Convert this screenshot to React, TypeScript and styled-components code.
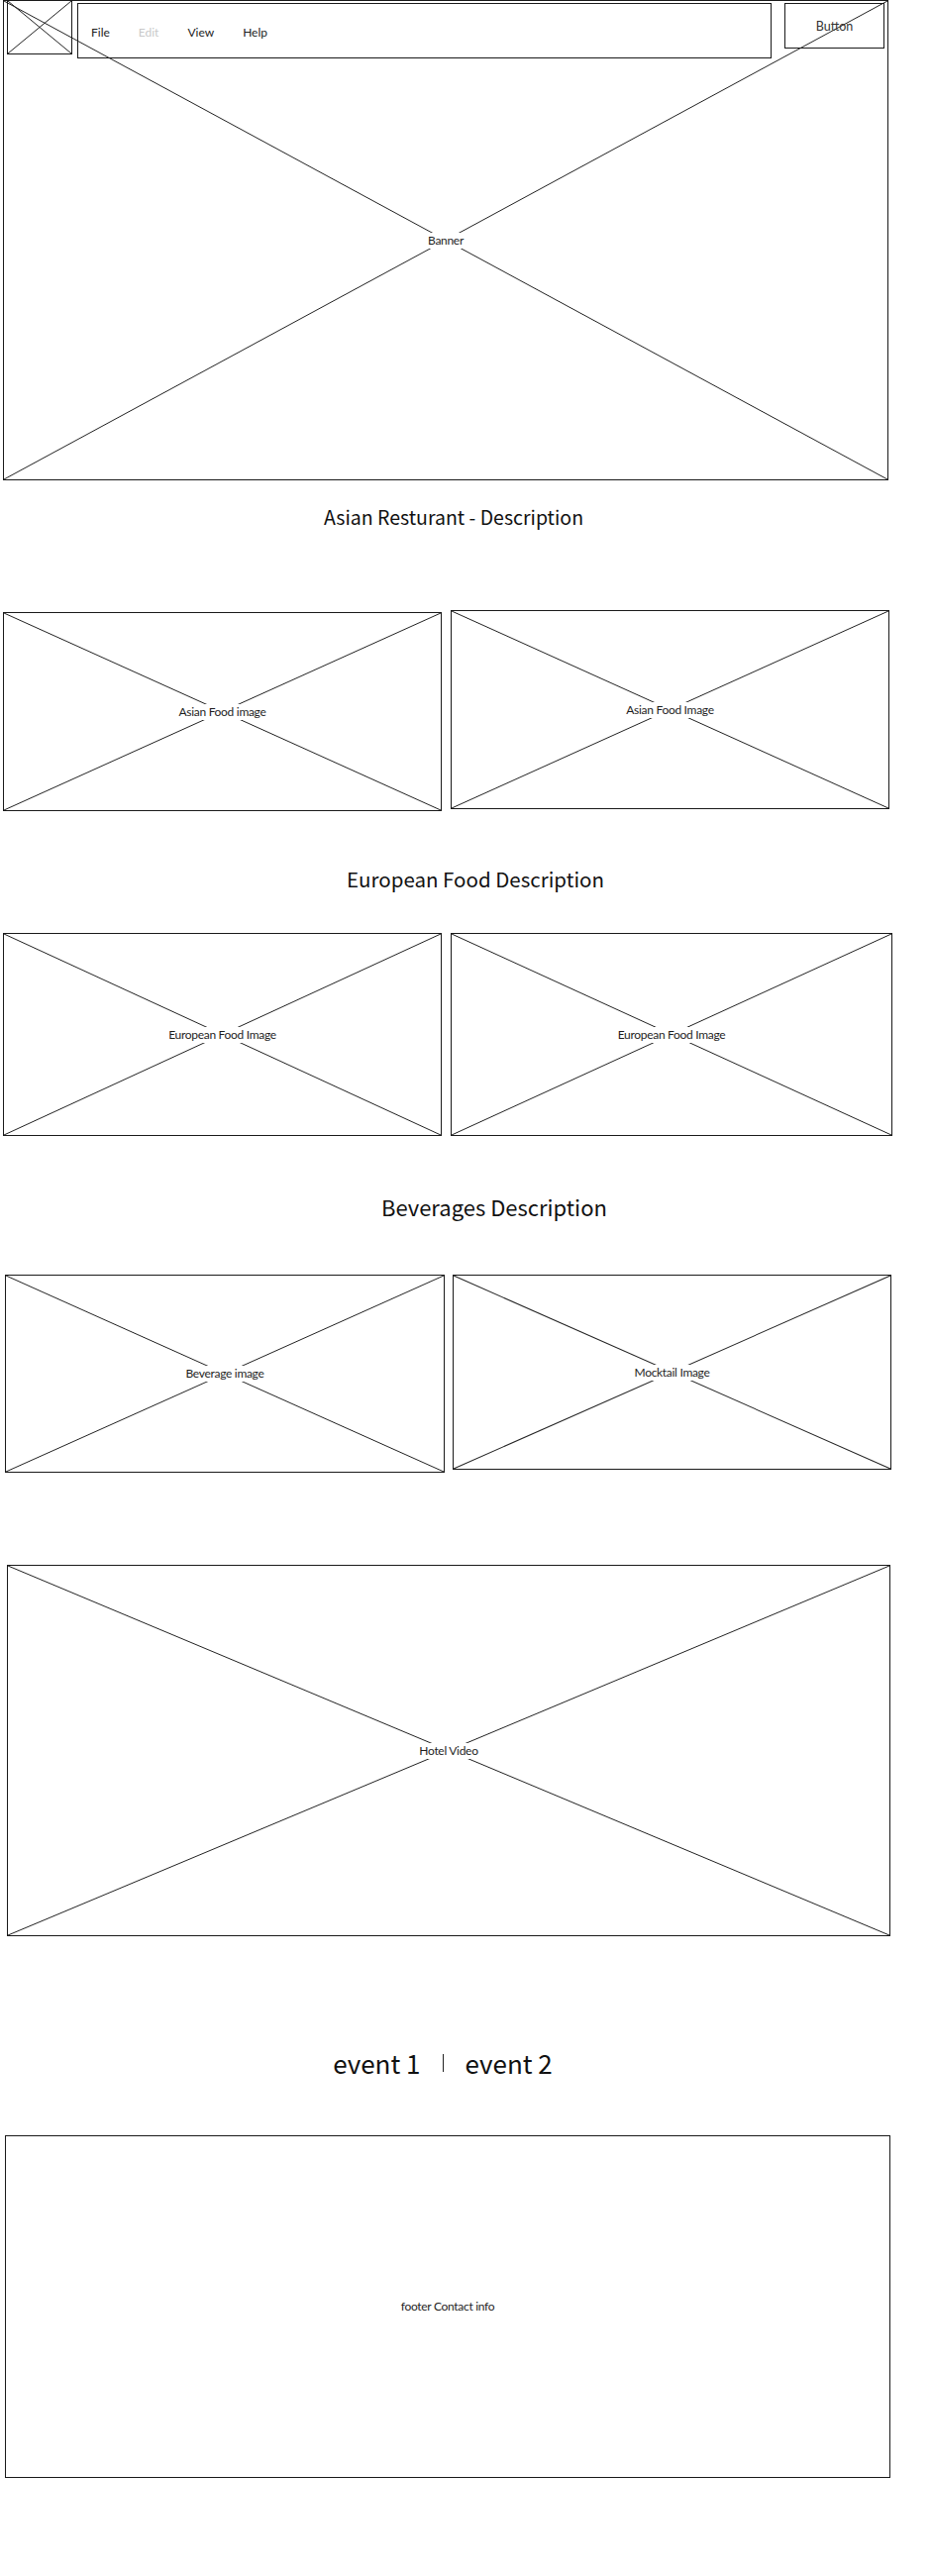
import React from "react";
import styled, { createGlobalStyle } from "styled-components";

const GlobalStyle = createGlobalStyle`
  html, body { margin: 0; padding: 0; background: #fff; }
  body {
    font-family: "Noto Sans CJK SC", "Lato", sans-serif;
    color: #141414;
  }
`;

const Page = styled.div`
  width: 941px;
  min-height: 2601px;
  display: flex;
  flex-direction: column;
  align-items: flex-start;
  overflow: hidden;
  background: #fff;
`;

const Frame = styled.div<{ $w: number; $h: number; $left?: number; $top?: number }>`
  position: relative;
  box-sizing: border-box;
  flex: none;
  width: ${(p) => p.$w}px;
  height: ${(p) => p.$h}px;
  margin-left: ${(p) => p.$left ?? 0}px;
  margin-top: ${(p) => p.$top ?? 0}px;
  border: 1px solid #1a1a1a;
  display: flex;
  align-items: center;
  justify-content: center;
`;

const CrossSvg = styled.svg`
  position: absolute;
  inset: 0;
  width: 100%;
  height: 100%;
  overflow: visible;
`;

const Label = styled.span`
  position: relative;
  z-index: 1;
  background: #fff;
  padding: 0 4px;
  font-family: "Lato", "Noto Sans CJK SC", sans-serif;
  font-size: 12px;
  letter-spacing: -0.3px;
  line-height: 16px;
  white-space: nowrap;
  color: #1e1e1e;
`;

const Header = styled.div`
  position: absolute;
  top: -1px;
  left: 3px;
  z-index: 2;
  display: flex;
  align-items: flex-start;
`;

const MenuBar = styled.nav`
  box-sizing: border-box;
  width: 701px;
  height: 56px;
  margin-top: 3px;
  margin-left: 5px;
  padding: 3px 0 0 13px;
  border: 1px solid #1a1a1a;
  display: flex;
  align-items: center;
  gap: 29px;
`;

const MenuItem = styled.span<{ $disabled?: boolean }>`
  font-family: "Lato", "Noto Sans CJK SC", sans-serif;
  font-size: 12px;
  color: ${(p) => (p.$disabled ? "#c9c9c9" : "#222")};
`;

const Button = styled.div`
  box-sizing: border-box;
  width: 101px;
  height: 46px;
  margin-top: 3px;
  margin-left: 13px;
  border: 1px solid #1a1a1a;
  display: flex;
  align-items: center;
  justify-content: center;
  font-family: "Lato", "Noto Sans CJK SC", sans-serif;
  font-size: 12.5px;
  color: #333;
`;

const Heading = styled.h2<{ $shift: number; $top: number; $size?: number }>`
  margin: ${(p) => p.$top}px 0 0 0;
  box-sizing: border-box;
  width: 941px;
  height: 40px;
  padding-left: ${(p) => Math.max(0, p.$shift * 2)}px;
  padding-right: ${(p) => Math.max(0, -p.$shift * 2)}px;
  display: flex;
  align-items: center;
  justify-content: center;
  gap: 22px;
  font-size: ${(p) => p.$size ?? 22}px;
  font-weight: 400;
  line-height: 40px;
  color: #111;
  white-space: nowrap;
`;

const Divider = styled.span`
  width: 1px;
  height: 18px;
  background: #222;
`;

const Row = styled.div<{ $left: number; $gap: number; $top: number }>`
  display: flex;
  align-items: flex-start;
  margin-top: ${(p) => p.$top}px;
  padding-left: ${(p) => p.$left}px;
  gap: ${(p) => p.$gap}px;
`;

const Cross: React.FC = () => (
  <CrossSvg viewBox="0 0 100 100" preserveAspectRatio="none" aria-hidden="true">
    <line x1="0" y1="0" x2="100" y2="100" stroke="#222" strokeWidth="1" vectorEffect="non-scaling-stroke" />
    <line x1="100" y1="0" x2="0" y2="100" stroke="#222" strokeWidth="1" vectorEffect="non-scaling-stroke" />
  </CrossSvg>
);

type PH = { w: number; h: number; left?: number; top?: number; label?: string };

const Placeholder: React.FC<PH> = ({ w, h, left, top, label }) => (
  <Frame $w={w} $h={h} $left={left} $top={top}>
    <Cross />
    {label && <Label>{label}</Label>}
  </Frame>
);

export default function App() {
  return (
    <>
      <GlobalStyle />
      <Page>
        <Frame $w={894} $h={485} $left={3}>
          <Cross />
          <Label>Banner</Label>
          <Header>
            <Placeholder w={66} h={55} />
            <MenuBar>
              <MenuItem>File</MenuItem>
              <MenuItem $disabled>Edit</MenuItem>
              <MenuItem>View</MenuItem>
              <MenuItem>Help</MenuItem>
            </MenuBar>
            <Button>Button</Button>
          </Header>
        </Frame>

        <Heading $shift={-12.5} $top={17} $size={19.5}>Asian Resturant - Description</Heading>

        <Row $left={3} $gap={9} $top={74}>
          <Placeholder w={443} h={201} top={2} label="Asian Food image" />
          <Placeholder w={443} h={201} label="Asian Food Image" />
        </Row>

        <Heading $shift={9.5} $top={48} $size={20.5}>European Food Description</Heading>

        <Row $left={3} $gap={9} $top={35}>
          <Placeholder w={443} h={205} label="European Food Image" />
          <Placeholder w={446} h={205} label="European Food Image" />
        </Row>

        <Heading $shift={28.5} $top={51} $size={22}>Beverages Description</Heading>

        <Row $left={5} $gap={8} $top={49}>
          <Placeholder w={444} h={200} label="Beverage image" />
          <Placeholder w={443} h={197} label="Mocktail Image" />
        </Row>

        <Placeholder w={892} h={375} left={7} top={93} label="Hotel Video" />

        <Heading $shift={-23.5} $top={108} $size={26}>
          <span>event 1</span>
          <Divider />
          <span>event 2</span>
        </Heading>

        <Frame $w={894} $h={346} $left={5} $top={53}>
          <Label>footer Contact info</Label>
        </Frame>
      </Page>
    </>
  );
}
